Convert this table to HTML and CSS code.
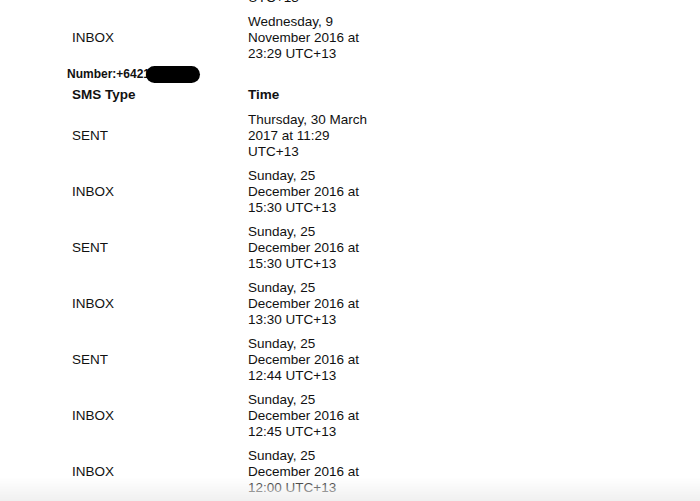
FILE: index.html
```html
<!DOCTYPE html>
<html>
<head>
<meta charset="utf-8">
<link rel="stylesheet" href="styles.css">
</head>
<body>
<div class="page">
  <table class="sms">
    <tr><td class="type">INBOX</td><td class="time">Thursday, 10 March 2017 at 09:12 UTC+13</td></tr>
    <tr><td class="type">INBOX</td><td class="time">Wednesday, 9 November 2016 at 23:29 UTC+13</td></tr>
  </table>
  <div class="number">Number:+6421<span class="redact"></span></div>
  <table class="sms">
    <tr class="head"><th class="type">SMS Type</th><th class="time">Time</th></tr>
    <tr><td class="type">SENT</td><td class="time">Thursday, 30 March 2017 at 11:29 UTC+13</td></tr>
    <tr><td class="type">INBOX</td><td class="time">Sunday, 25 December 2016 at 15:30 UTC+13</td></tr>
    <tr><td class="type">SENT</td><td class="time">Sunday, 25 December 2016 at 15:30 UTC+13</td></tr>
    <tr><td class="type">INBOX</td><td class="time">Sunday, 25 December 2016 at 13:30 UTC+13</td></tr>
    <tr><td class="type">SENT</td><td class="time">Sunday, 25 December 2016 at 12:44 UTC+13</td></tr>
    <tr><td class="type">INBOX</td><td class="time">Sunday, 25 December 2016 at 12:45 UTC+13</td></tr>
    <tr><td class="type">INBOX</td><td class="time">Sunday, 25 December 2016 at 12:00 UTC+13</td></tr>
  </table>
</div>
<div class="fade"></div>
</body>
</html>
```

FILE: styles.css
```css
html, body {
  margin: 0;
  padding: 0;
  background: #fff;
  overflow: hidden;
}
body {
  font-family: "Liberation Sans", Arial, Helvetica, sans-serif;
  color: #111;
}
.page {
  padding-left: 67px;
  margin-top: -46px;
}
.sms {
  border-collapse: collapse;
  font-size: 13.5px;
  line-height: 16px;
}
.sms td, .sms th {
  padding: 4px 0;
  vertical-align: middle;
  text-align: left;
}
.sms th {
  font-weight: bold;
  padding: 3px 0 5px;
}
.sms .type {
  width: 176px;
  padding-left: 5px;
}
.sms .time {
  width: 128px;
}
.number {
  font-size: 12px;
  font-weight: bold;
  line-height: 16px;
  height: 18px;
}
.redact {
  display: inline-block;
  width: 54px;
  height: 17px;
  background: #000;
  border-radius: 9px;
  vertical-align: top;
  margin-left: -4px;
}
.fade {
  position: fixed;
  left: 0;
  right: 0;
  bottom: 0;
  height: 24px;
  background: linear-gradient(to bottom, rgba(240,240,240,0), #f0f0f0);
}
```
